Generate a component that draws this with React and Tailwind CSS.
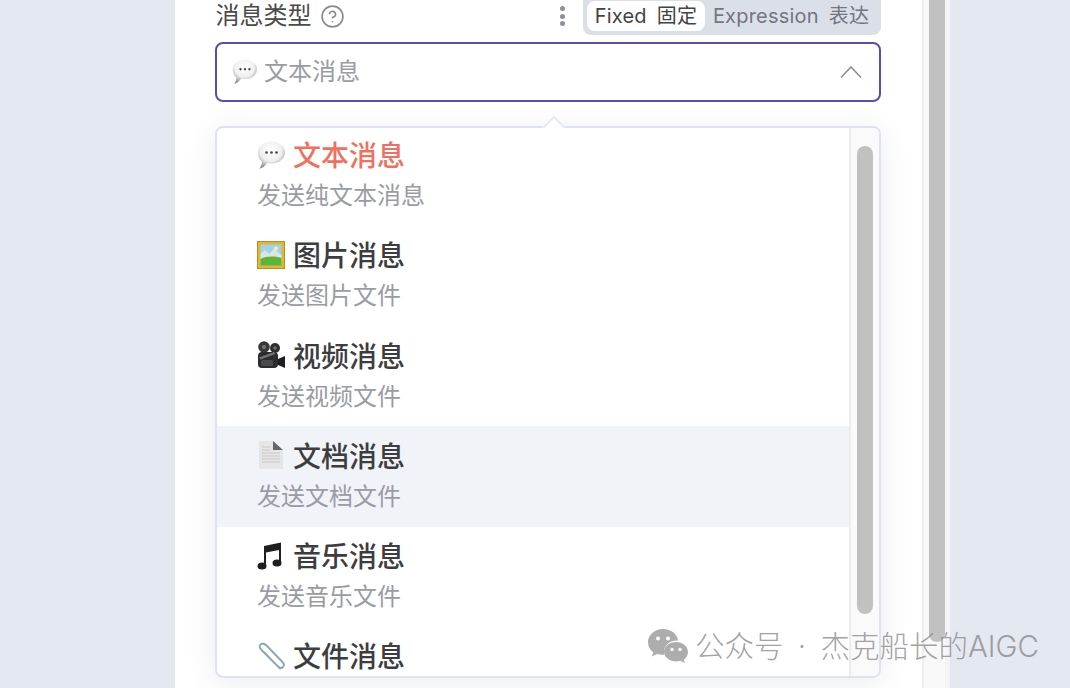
import React from 'react';
import { CircleHelp } from 'lucide-react';

const BubbleIcon = ({ size = 28 }) => (
  <svg width={size} height={size} viewBox="0 0 28 28">
    <defs>
      <radialGradient id="bubble" cx="48%" cy="32%" r="68%">
        <stop offset="0%" stopColor="#ffffff" />
        <stop offset="60%" stopColor="#efefef" />
        <stop offset="100%" stopColor="#8f8f8f" />
      </radialGradient>
    </defs>
    <path
      d="M14.500 0.500C21.900 0.500 28 5.400 28 11.500s-6.100 11-13.500 11c-1.500 0-2.900-.2-4.200-.5C8.500 24.800 5.500 27 2.300 27.800c1.400-1.700 2.500-3.800 2.700-7C2.200 18.800 1 15.400 1 11.500 1 5.400 7.100 0.500 14.500 0.500z"
      fill="url(#bubble)"
    />
    <circle cx="9.500" cy="11.500" r="1.300" fill="#444" />
    <circle cx="14.500" cy="11.500" r="1.300" fill="#444" />
    <circle cx="19.500" cy="11.500" r="1.300" fill="#444" />
  </svg>
);

const FrameIcon = () => (
  <svg width="28" height="28" viewBox="0 0 28 28">
    <rect x="0" y="0" width="28" height="28" fill="#b98f22" />
    <rect x="1" y="1" width="26" height="26" fill="#e3b534" />
    <rect x="3.500" y="3.500" width="21" height="21" fill="#9fd3ea" />
    <path d="M3.500 13l4-4 5 4 4-5 8 6v5h-21z" fill="#dbe5e2" />
    <path d="M3.500 18c6-3 13-3 21-1v7.500h-21z" fill="#5fb436" />
    <circle cx="19" cy="7.500" r="2" fill="#f4efc0" />
  </svg>
);

const CameraIcon = () => (
  <svg width="28" height="28" viewBox="0 0 28 28">
    <circle cx="7" cy="6" r="5.800" fill="#38383a" />
    <circle cx="18" cy="7" r="5" fill="#2f2f31" />
    <circle cx="7" cy="6" r="2" fill="#77777a" />
    <circle cx="18" cy="7" r="1.800" fill="#6c6c6f" />
    <rect x="1" y="11" width="20" height="16" rx="4" fill="#2c2c2e" />
    <rect x="4" y="19" width="12" height="6" rx="1.500" fill="#4a4a4d" />
    <path d="M2 16.500l15-5.500 1.500 2-15 5.500z" fill="#727275" />
    <path d="M21 18l7-3v12l-7-3z" fill="#1f1f21" />
  </svg>
);

const DocIcon = () => (
  <svg width="28" height="28" viewBox="0 0 28 28">
    <path d="M2 0h14l10 9v19H2z" fill="#e6e6e6" />
    <path d="M16 0l10 9H16z" fill="#666" />
    <path d="M5 6h8M5 9h8M5 12h18M5 15h18M5 18h18M5 21h18" stroke="#d2d2d2" strokeWidth="1.500" />
  </svg>
);

const MusicIcon = () => (
  <svg width="28" height="28" viewBox="0 0 28 28">
    <path d="M7 4L24 0.500v20h-2V8L9 10.500V24H7z" fill="#1f1f21" />
    <ellipse cx="5" cy="24" rx="4.500" ry="3.500" fill="#1f1f21" />
    <ellipse cx="20" cy="21" rx="4.500" ry="3.500" fill="#1f1f21" />
  </svg>
);

const ClipIcon = () => (
  <svg width="28" height="28" viewBox="0 0 28 28" fill="none">
    <path
      d="M23 26.500L5 8.500C2.500 6 2 4 3.500 2.500S7.500 1.500 10 4l15 15.500c2 2 2.500 4 1 5.500s-3.500 1-5.500-1L7.500 10.500"
      stroke="#8fa3b8"
      strokeWidth="1.800"
      strokeLinecap="round"
    />
  </svg>
);

const WeChatIcon = () => (
  <svg width="40" height="34" viewBox="0 0 40 34">
    <path d="M15 0c8 0 14.500 5 15 11.500-7.500-.5-14 4.500-14 11 0 1 .2 2 .5 3-1 .2-1.800.2-2.500.2-1.800 0-3.300-.3-5-.8L4 27.500l1.200-4.300C2 21 0 17.500 0 13 0 5.800 6.800 0 15 0z" fill="#adadad" />
    <path d="M28 13c6.600 0 12 4.400 12 10 0 3.200-1.700 5.800-4.200 7.800L37 34l-4.600-2.200c-1.500.4-3 .6-4.400.6-6.600 0-12-4.400-12-9.700S21.400 13 28 13z" fill="#adadad" />
    <circle cx="10" cy="9.500" r="2" fill="#fff" />
    <circle cx="20" cy="9.500" r="2" fill="#fff" />
    <circle cx="24" cy="20.500" r="1.700" fill="#fff" />
    <circle cx="32" cy="20.500" r="1.700" fill="#fff" />
  </svg>
);

const options = [
  { icon: <BubbleIcon />, title: '文本消息', desc: '发送纯文本消息', selected: true },
  { icon: <FrameIcon />, title: '图片消息', desc: '发送图片文件' },
  { icon: <CameraIcon />, title: '视频消息', desc: '发送视频文件' },
  { icon: <DocIcon />, title: '文档消息', desc: '发送文档文件', hover: true },
  { icon: <MusicIcon />, title: '音乐消息', desc: '发送音乐文件' },
  { icon: <ClipIcon />, title: '文件消息' },
];

const App = () => {
  return (
    <div className="relative flex h-[688px] w-[1070px] overflow-hidden bg-[#e4e8f1] font-[Inter,'Noto_Sans_CJK_SC',sans-serif]">
      <div className="w-[175px] shrink-0" />
      <div className="flex w-[775px] shrink-0 bg-white">
        <div className="w-[747px] shrink-0 pl-[41px] pr-[41px]">
          <div className="-ml-[0.500px] flex h-[35px] items-start justify-between">
            <div className="flex h-[32px] items-center gap-[8px]">
              <span className="text-[24px] leading-[32px] text-[#4a4a4a]">消息类型</span>
              <CircleHelp size={25} strokeWidth={1.6} className="text-[#8c8c8c]" />
            </div>
            <div className="flex items-start">
              <div className="mr-[18px] flex h-[32px] flex-col items-center justify-center gap-[2.500px]">
                <div className="h-[5px] w-[5px] rounded-full bg-[#8f8f99]" />
                <div className="h-[5px] w-[5px] rounded-full bg-[#8f8f99]" />
                <div className="h-[5px] w-[5px] rounded-full bg-[#8f8f99]" />
              </div>
              <div className="flex h-[35px] w-[298px] rounded-b-lg bg-[#dbdfe8] pl-[4px] pt-[1px]">
                <div className="flex h-[30px] w-[118px] items-center justify-center gap-[10px] rounded-lg bg-white text-[20px] tracking-[0.2px] text-[#444]">
                  <span>Fixed</span>
                  <span>固定</span>
                </div>
                <div className="flex h-[30px] flex-1 items-center justify-center gap-[10px] pr-[4px] text-[20px] tracking-[0.2px] text-[#73757f]">
                  <span>Expression</span>
                  <span>表达</span>
                </div>
              </div>
            </div>
          </div>
          <div className="-ml-[1px] mt-[7px] flex h-[60px] items-center justify-between rounded-lg border-2 border-[#5a4cb8] pl-[15px] pr-[17px]">
            <div className="flex items-center gap-[7px] text-[24px] text-[#9a9ca3]">
              <div className="-mt-[2px]">
                <BubbleIcon size={25} />
              </div>
              <span>文本消息</span>
            </div>
            <svg width="22" height="12" viewBox="0 0 22 12" fill="none">
              <path d="M1 11.500L11 1l10 10.500" stroke="#8c8c8c" strokeWidth="1.500" />
            </svg>
          </div>
          <div className="relative -ml-[1px] mt-[24px] h-[552px] rounded-lg border-2 border-[#dfe3ee] bg-white shadow-[0_4px_28px_rgba(90,100,130,0.12)]">
            <div className="absolute -top-[9px] left-[329px] h-[16px] w-[16px] rotate-45 border-l-2 border-t-2 border-[#e6e9f1] bg-white" />
            <div className="relative flex h-full overflow-hidden rounded-md">
              <div className="-mt-[2.600px] flex-1">
                {options.map((o) => (
                  <div
                    key={o.title}
                    className={`h-[100.300px] pl-[40px] pt-[10.600px] ${o.hover ? 'bg-[#f0f3f8]' : ''}`}
                  >
                    <div className="flex h-[40px] items-center gap-[8px]">
                      <div className="-mt-[3px]">{o.icon}</div>
                      <span
                        className={`text-[28px] font-medium leading-[40px] ${
                          o.selected ? 'text-[#f0705f]' : 'text-[#3d3d3f]'
                        }`}
                      >
                        {o.title}
                      </span>
                    </div>
                    {o.desc && (
                      <div className="mt-[2px] text-[24px] leading-[36px] text-[#9a9ca3]">{o.desc}</div>
                    )}
                  </div>
                ))}
              </div>
              <div className="h-full w-[30px] shrink-0 border-l-2 border-[#ececec] bg-[#fafafa] pl-[6px] pt-[18px]">
                <div className="h-[468px] w-[16px] rounded-full bg-[#c1c1c1]" />
              </div>
            </div>
          </div>
        </div>
        <div className="h-full w-[23px] shrink-0 border-l-2 border-[#eeeeee] bg-[#f9f9f9] pl-[5px]">
          <div className="h-[642px] w-[16px] rounded-b-full bg-[#c1c1c1]" />
        </div>
        <div className="h-full w-[5px] shrink-0 bg-[#f3f4f7]" />
      </div>
      <div className="absolute left-[648px] top-[628px] flex items-center gap-[7px] text-[29.500px] font-light leading-[36px] text-[#8a8a8a]/80 [word-spacing:6px]">
        <WeChatIcon />
        <span>公众号 · 杰克船长的AIGC</span>
      </div>
    </div>
  );
};

export default App;
